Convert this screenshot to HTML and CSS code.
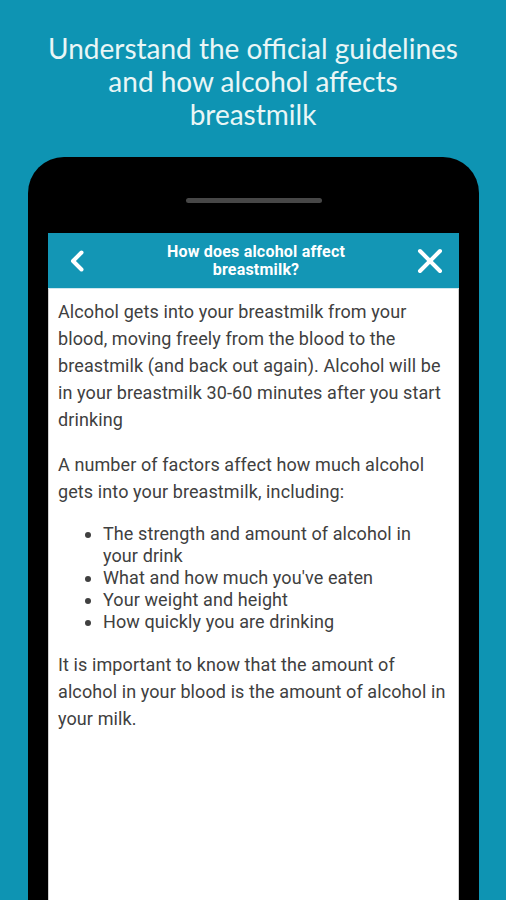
FILE: index.html
```html
<!DOCTYPE html>
<html lang="en">
<head>
<meta charset="utf-8">
<title>How does alcohol affect breastmilk?</title>
<link rel="stylesheet" href="styles.css">
</head>
<body>
<div class="page">
  <h1 class="headline">Understand the official guidelines<br>and how alcohol affects<br>breastmilk</h1>
  <div class="phone">
    <div class="speaker"></div>
    <div class="screen">
      <header class="appbar">
        <svg class="icon back" width="16" height="22" viewBox="0 0 16 22" aria-hidden="true">
          <path d="M12.5 2.5 L4 11 L12.5 19.5" fill="none" stroke="#fff" stroke-width="4" stroke-linecap="round" stroke-linejoin="round"/>
        </svg>
        <div class="title">How does alcohol affect<br>breastmilk?</div>
        <svg class="icon close" width="26" height="26" viewBox="0 0 26 26" aria-hidden="true">
          <path d="M3 3 L23 23 M23 3 L3 23" fill="none" stroke="#fff" stroke-width="4" stroke-linecap="round"/>
        </svg>
      </header>
      <div class="content">
        <p>Alcohol gets into your breastmilk from your blood, moving freely from the blood to the breastmilk (and back out again). Alcohol will be in your breastmilk 30-60 minutes after you start drinking</p>
        <p>A number of factors affect how much alcohol gets into your breastmilk, including:</p>
        <ul>
          <li>The strength and amount of alcohol in your drink</li>
          <li>What and how much you've eaten</li>
          <li>Your weight and height</li>
          <li>How quickly you are drinking</li>
        </ul>
        <p>It is important to know that the amount of alcohol in your blood is the amount of alcohol in your milk.</p>
      </div>
    </div>
  </div>
</div>
</body>
</html>
```

FILE: styles.css
```css
html, body {
  margin: 0;
  padding: 0;
}

body {
  background: #0e94b3;
  font-family: Roboto, "Liberation Sans", sans-serif;
}

.page {
  height: 900px;
  display: flex;
  flex-direction: column;
  overflow: hidden;
}

.headline {
  margin: 0;
  padding-top: 32px;
  font-family: Lato, "Open Sans", sans-serif;
  font-weight: 400;
  font-size: 28px;
  line-height: 33px;
  color: #e9f6f6;
  text-align: center;
}

.phone {
  flex: 1;
  margin: 26px 27px 0 28px;
  padding: 41px 20px 0;
  background: #000;
  border-radius: 36px 36px 0 0;
  display: flex;
  flex-direction: column;
}

.speaker {
  width: 136px;
  height: 5px;
  margin: 0 auto 30px;
  border-radius: 3px;
  background: #474747;
}

.screen {
  flex: 1;
  background: #fff;
  display: flex;
  flex-direction: column;
  box-shadow: inset 1px 0 0 #cfcfcf, inset -1px 0 0 #cfcfcf;
}

.appbar {
  height: 55px;
  background: #1396b5;
  display: flex;
  align-items: center;
  padding: 0 16px 0 21px;
  box-shadow: 0 1px 0 #cfe7ee;
}

.title {
  flex: 1;
  text-align: center;
  color: #fff;
  font-weight: 700;
  font-size: 16px;
  line-height: 18px;
  letter-spacing: 0.2px;
}

.icon {
  display: block;
  flex: none;
}

.back {
  margin-right: 10px;
}

.close {
  margin-left: 0;
}

.content {
  padding: 10px 10px 0 10px;
  font-size: 18px;
  line-height: 27px;
  letter-spacing: 0.1px;
  color: #404040;
}

.content p {
  margin: 0 0 18px;
}

.content ul {
  margin: 0 0 18px;
  padding: 0 10px 0 45px;
  line-height: 22px;
}
```
